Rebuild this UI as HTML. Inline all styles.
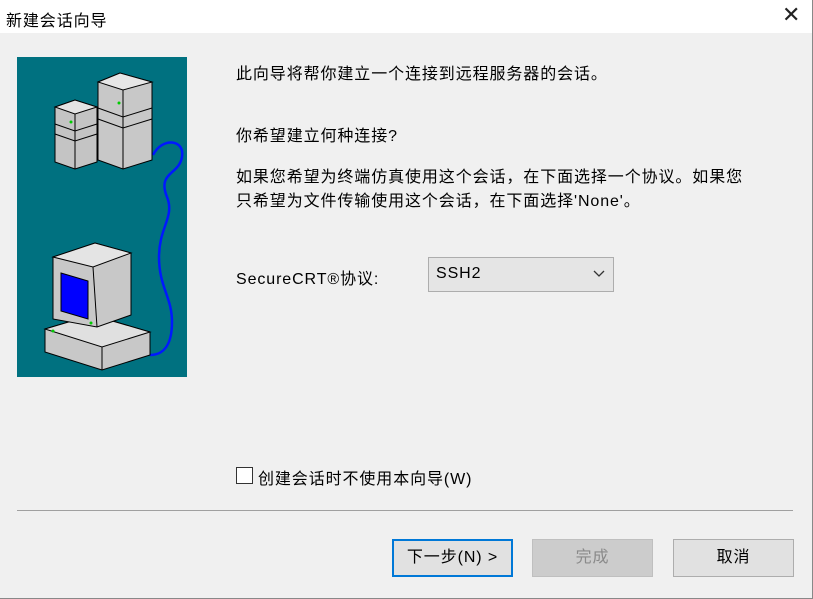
<!DOCTYPE html>
<html><head><meta charset="utf-8"><style>
body{margin:0;width:813px;height:599px;background:#f0f0f0;font-family:"Liberation Sans","Noto Sans CJK SC",sans-serif;font-size:16px;letter-spacing:0.9px;color:#000;position:relative;overflow:hidden}
.a{position:absolute}
.title{left:0;top:0;width:812px;height:33px;background:#fff}
.btn{position:absolute;top:539px;height:36px;border:1px solid #adadad;background:#e1e1e1;text-align:center;line-height:36px;font-size:16px}
</style></head><body>
<div class="a title"></div>
<div class="a" style="left:6px;top:7px">新建会话向导</div>
<div class="a" style="left:782px;top:2px;font-size:22px;font-weight:200;color:#222">✕</div>
<div class="a" style="right:0;top:0;width:1px;height:599px;background:#888"></div>
<div class="a" style="left:0;bottom:0;width:813px;height:1px;background:#888"></div>
<div class="a" style="left:17px;top:57px;width:170px;height:320px;background:#007180">
<svg width="170" height="320" viewBox="0 0 170 320">
<path d="M136 98 C145 80 168 82 165 100 C162 118 140 115 150 140 C158 160 142 170 142 200 C142 230 155 240 155 265 C155 290 145 298 133 298" stroke="#0018ff" stroke-width="2.5" fill="none"/>
<g stroke="#000" stroke-width="1">
<path d="M38 50 L58 43 L80 50 L80 105 L58 112 L38 105Z" fill="#c4c4c4"/>
<path d="M38 50 L58 43 L80 50 L58 57Z" fill="#e4e4e4"/>
<path d="M58 57 L58 112 M38 67 L58 74 L80 67 M38 77 L58 84 L80 77" fill="none"/>
<path d="M81 25 L103 16 L135 25 L135 103 L106 112 L81 103Z" fill="#c8c8c8"/>
<path d="M81 25 L103 16 L135 25 L106 33Z" fill="#e6e6e6"/>
<path d="M106 33 L106 112 M81 51 L106 60 L135 51 M81 62 L106 71 L135 62" fill="none"/>
<path d="M28 272 L75 258 L133 275 L133 298 L85 313 L28 295Z" fill="#c8c8c8"/>
<path d="M28 272 L75 258 L133 275 L85 290Z" fill="#e0e0e0"/>
<path d="M85 290 L85 313" fill="none"/>
<path d="M36 200 L78 186 L114 196 L114 258 L80 270 L36 262Z" fill="#c8c8c8"/>
<path d="M36 200 L78 186 L114 196 L76 210Z" fill="#e4e4e4"/>
<path d="M76 210 L80 270" fill="none"/>
</g>
<path d="M44 216 L71 224 L71 262 L44 254Z" fill="#0000ff" stroke="#000"/>
<circle cx="54" cy="65" r="1.5" fill="#0c0"/><circle cx="102" cy="46" r="1.5" fill="#0c0"/><circle cx="74" cy="266" r="1.5" fill="#0c0"/><circle cx="36" cy="274" r="1.5" fill="#0c0"/>
</svg>
</div>
<div class="a" style="left:236px;top:60px">此向导将帮你建立一个连接到远程服务器的会话。</div>
<div class="a" style="left:236px;top:122px">你希望建立何种连接?</div>
<div class="a" style="left:236px;top:166px;line-height:24px">如果您希望为终端仿真使用这个会话，在下面选择一个协议。如果您<br>只希望为文件传输使用这个会话，在下面选择'None'。</div>
<div class="a" style="left:236px;top:265px">SecureCRT®协议:</div>
<div class="a" style="left:428px;top:257px;width:184px;height:33px;border:1px solid #adadad;background:#e5e5e5"><span class="a" style="left:7px;top:7px">SSH2</span>
<svg class="a" style="left:164px;top:12px" width="12" height="8"><path d="M1 1 L6 6 L11 1" stroke="#333" fill="none" stroke-width="1.3"/></svg></div>
<div class="a" style="left:236px;top:467px;width:15px;height:15px;border:1px solid #333;background:#fff"></div>
<div class="a" style="left:258px;top:465px">创建会话时不使用本向导(W)</div>
<div class="a" style="left:17px;top:510px;width:776px;height:1px;background:#a0a0a0"></div>
<div class="btn" style="left:392px;width:117px;border:2px solid #0078d7;height:34px;line-height:34px">下一步(N) &gt;</div>
<div class="btn" style="left:532px;width:119px;background:#cccccc;border-color:#bfbfbf;color:#8a8a8a">完成</div>
<div class="btn" style="left:673px;width:119px">取消</div>
</body></html>
